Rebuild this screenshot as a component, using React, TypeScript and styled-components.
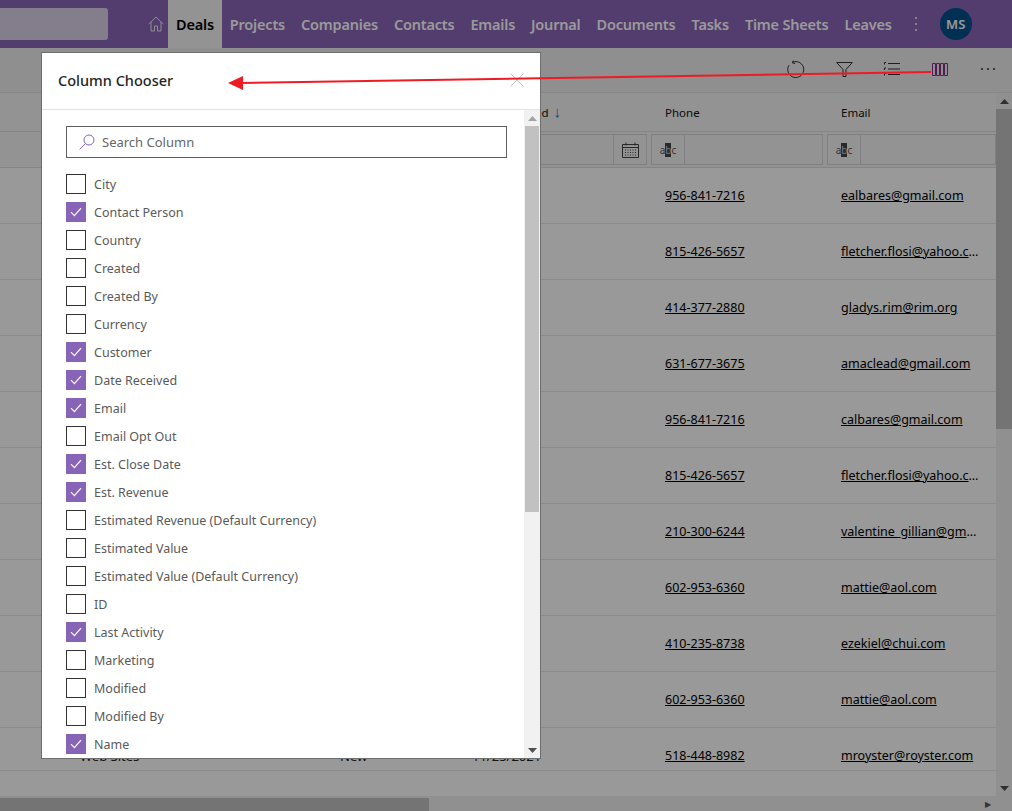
import React, { FunctionComponent } from "react";
import styled, { createGlobalStyle } from "styled-components";

const GlobalStyle = createGlobalStyle`
  html, body {
    margin: 0;
    padding: 0;
    background: #fff;
  }
  body {
    font-family: "Noto Sans", "Open Sans", "Liberation Sans", sans-serif;
  }
`;

const Page = styled.div`
  position: relative;
  width: 1012px;
  height: 811px;
  overflow: hidden;
  display: flex;
  flex-direction: column;
  background: #fff;
`;
const Nav = styled.nav`
  height: 48px;
  flex: none;
  display: flex;
  align-items: center;
  background: #8a64b8;
`;
const NavSearch = styled.div`
  width: 108px;
  height: 32px;
  flex: none;
  background: #e4d9ee;
  border-radius: 0 3px 3px 0;
  opacity: 0.92;
`;
const HomeLink = styled.span`
  margin-left: 35px;
  width: 25px;
  display: flex;
  justify-content: center;
  color: #eee;
`;
const NavList = styled.div`
  display: flex;
  align-self: stretch;
  align-items: center;
  font-size: 14.5px;
  font-weight: 600;
  letter-spacing: -0.2px;
`;
const NavItem = styled.a<{ $active?: boolean }>`
  height: 100%;
  display: flex;
  align-items: center;
  padding: 0 8px;
  color: ${(p) => (p.$active ? "#000" : "#fff")};
  background: ${(p) => (p.$active ? "#f5f5f5" : "transparent")};
`;
const Kebab = styled.span`
  margin-left: 8px;
  width: 16px;
  display: flex;
  justify-content: center;
  color: #fff;
`;
const Avatar = styled.div`
  margin-left: 16px;
  width: 32px;
  height: 32px;
  border-radius: 50%;
  background: #00518c;
  color: #fff;
  font-size: 13px;
  font-weight: 600;
  display: flex;
  align-items: center;
  justify-content: center;
`;
const Toolbar = styled.div`
  height: 44px;
  flex: none;
  display: flex;
  align-items: center;
  justify-content: flex-end;
  gap: 24px;
  padding-right: 12px;
  padding-bottom: 2px;
  box-sizing: border-box;
  background: #eeeeee;
`;
const ToolIcon = styled.span`
  width: 24px;
  height: 24px;
  display: flex;
  align-items: center;
  justify-content: center;
  color: #333;
`;
const Main = styled.div`
  flex: 1;
  min-height: 0;
  display: flex;
  border-top: 1px solid #e2e2e2;
  box-sizing: border-box;
`;
const GridArea = styled.div`
  flex: 1;
  min-width: 0;
  overflow: hidden;
  display: flex;
  flex-direction: column;
`;
const columns = "80px 260px 132px 193px 176px 155px";
const HeadRow = styled.div`
  display: grid;
  grid-template-columns: ${columns};
  height: 38px;
  flex: none;
  align-items: center;
  font-size: 11.5px;
  color: #111;
  background: #f5f5f5;
  border-bottom: 1px solid #dedede;
`;
const SortArrow = styled.span`
  margin-left: 5px;
  color: #0078d4;
  font-size: 15px;
  line-height: 1;
`;
const FilterRow = styled.div`
  height: 36px;
  flex: none;
  box-sizing: border-box;
  display: flex;
  justify-content: flex-end;
  gap: 4px;
  padding-top: 2px;
  background: #f5f5f5;
  border-bottom: 1px solid #dedede;
`;
const FilterCell = styled.div<{ $width: number }>`
  width: ${(p) => p.$width}px;
  height: 31px;
  flex: none;
  box-sizing: border-box;
  border: 1px solid #d6d6d6;
  display: flex;
  justify-content: flex-end;
`;
const FilterAddon = styled.div<{ $side: "left" | "right" }>`
  width: 32px;
  flex: none;
  margin-right: ${(p) => (p.$side === "left" ? "auto" : "0")};
  ${(p) => (p.$side === "left" ? "border-right" : "border-left")}: 1px solid #d6d6d6;
  display: flex;
  align-items: center;
  justify-content: center;
  font-size: 10px;
  color: #555;
`;
const AbcMark = styled.b`
  font-weight: 400;
  background: #444;
  color: #ccc;
`;
const Row = styled.div<{ $short?: boolean }>`
  display: grid;
  grid-template-columns: ${columns};
  height: ${(p) => (p.$short ? 43 : 56)}px;
  flex: none;
  box-sizing: border-box;
  align-items: ${(p) => (p.$short ? "start" : "center")};
  padding-top: ${(p) => (p.$short ? 19 : 0)}px;
  font-size: 13px;
  color: #222;
  border-bottom: 1px solid #e6e6e6;
`;
const CellLink = styled.a`
  color: #000;
  text-decoration: underline;
  font-size: 12.5px;
  white-space: nowrap;
  overflow: hidden;
  text-overflow: ellipsis;
  max-width: 142px;
`;
const VScrollbar = styled.div`
  width: 16px;
  flex: none;
  display: flex;
  flex-direction: column;
  align-items: center;
  background: #f0f0f0;
`;
const HScrollbar = styled.div`
  height: 15px;
  flex: none;
  display: flex;
  align-items: flex-end;
  background: #f0f0f0;
`;
const HThumb = styled.div`
  width: 429px;
  height: 13px;
  background: #c1c1c1;
`;
const HEnd = styled.div`
  margin-left: auto;
  width: 27px;
  height: 15px;
  display: flex;
  align-items: center;
  color: #555;
  font-size: 8px;
`;
const ArrowButton = styled.div<{ $dark?: boolean }>`
  height: 16px;
  flex: none;
  width: 100%;
  display: flex;
  align-items: center;
  justify-content: center;
  color: ${(p) => (p.$dark ? "#505050" : "#a3a3a3")};
`;
const Thumb = styled.div<{ $height: number; $width: number }>`
  width: ${(p) => p.$width}px;
  height: ${(p) => p.$height}px;
  flex: none;
  background: #c1c1c1;
`;
const Spacer = styled.div`
  flex: 1;
`;
const Overlay = styled.div`
  position: absolute;
  inset: 0;
  background: rgba(0, 0, 0, 0.4);
`;
const Modal = styled.div`
  position: absolute;
  left: 41px;
  top: 52px;
  width: 500px;
  height: 707px;
  box-sizing: border-box;
  border: 1px solid #6e6e6e;
  background: #fff;
  display: flex;
  flex-direction: column;
`;
const ModalHeader = styled.div`
  height: 57px;
  flex: none;
  box-sizing: border-box;
  padding: 0 16px 2px 16px;
  border-bottom: 1px solid #e3e3e3;
  display: flex;
  align-items: center;
  justify-content: space-between;
`;
const ModalTitle = styled.h2`
  margin: 0;
  font-size: 14.5px;
  font-weight: 500;
  color: #252525;
`;
const CloseButton = styled.span`
  display: flex;
  color: #c4c4c4;
`;
const ModalBody = styled.div`
  flex: 1;
  min-height: 0;
  display: flex;
`;
const ModalContent = styled.div`
  flex: 1;
  min-width: 0;
  overflow: hidden;
  padding: 16px 17px 0 24px;
`;
const SearchBox = styled.div`
  height: 32px;
  box-sizing: border-box;
  border: 1px solid #605e5c;
  display: flex;
  align-items: center;
  gap: 7px;
  padding-left: 12px;
  font-size: 13px;
  color: #666;
`;
const ChoiceList = styled.ul`
  list-style: none;
  margin: 12px 0 0 0;
  padding: 0;
`;
const Choice = styled.li`
  height: 28px;
  display: flex;
  align-items: center;
  gap: 8px;
  font-size: 12.5px;
  color: #5a5a5a;
`;
const Box = styled.span<{ $checked: boolean }>`
  width: 20px;
  height: 20px;
  flex: none;
  box-sizing: border-box;
  border: 1px solid ${(p) => (p.$checked ? "#8764b8" : "#333")};
  background: ${(p) => (p.$checked ? "#8764b8" : "#fff")};
  display: flex;
  align-items: center;
  justify-content: center;
`;
const ModalScroll = styled(VScrollbar)`
  background: #f1f1f1;
`;
const Annotation = styled.svg`
  position: absolute;
  left: 0;
  top: 0;
  pointer-events: none;
`;

const rows = [
  ["956-841-7216", "ealbares@gmail.com"],
  ["815-426-5657", "fletcher.flosi@yahoo.com"],
  ["414-377-2880", "gladys.rim@rim.org"],
  ["631-677-3675", "amaclead@gmail.com"],
  ["956-841-7216", "calbares@gmail.com"],
  ["815-426-5657", "fletcher.flosi@yahoo.com"],
  ["210-300-6244", "valentine_gillian@gmail.com"],
  ["602-953-6360", "mattie@aol.com"],
  ["410-235-8738", "ezekiel@chui.com"],
  ["602-953-6360", "mattie@aol.com"],
];

const choices: [string, boolean][] = [
  ["City", false],
  ["Contact Person", true],
  ["Country", false],
  ["Created", false],
  ["Created By", false],
  ["Currency", false],
  ["Customer", true],
  ["Date Received", true],
  ["Email", true],
  ["Email Opt Out", false],
  ["Est. Close Date", true],
  ["Est. Revenue", true],
  ["Estimated Revenue (Default Currency)", false],
  ["Estimated Value", false],
  ["Estimated Value (Default Currency)", false],
  ["ID", false],
  ["Last Activity", true],
  ["Marketing", false],
  ["Modified", false],
  ["Modified By", false],
  ["Name", true],
];

const navItems = ["Projects", "Companies", "Contacts", "Emails", "Journal", "Documents", "Tasks", "Time Sheets", "Leaves"];

const Triangle: FunctionComponent<{ up?: boolean }> = ({ up }) => (
  <svg width="9" height="5" viewBox="0 0 9 5">
    <path d={up ? "M4.5 0L9 5H0z" : "M0 0h9L4.5 5z"} fill="currentColor" />
  </svg>
);

const Calendar = () => (
  <svg width="17" height="16" viewBox="0 0 17 16" fill="none" stroke="#444">
    <path d="M.5 2.5h16v13H.5zM.5 5.5h16M4 .5v3M13 .5v3" />
    <path d="M3 8h11M3 10.5h11M3 13h11" strokeDasharray="1 1.5" />
  </svg>
);

const Abc = () => (
  <FilterAddon $side="left">
    a<AbcMark>b</AbcMark>c
  </FilterAddon>
);

const App: FunctionComponent = () => {
  return (
    <Page>
      <GlobalStyle />
      <Nav>
        <NavSearch />
        <HomeLink>
          <svg width="16" height="16" viewBox="0 0 16 16" fill="none" stroke="currentColor">
            <path d="M.8 8L8 1l7.2 7M3 6v9h3.5v-5h3v5H13V6" />
          </svg>
        </HomeLink>
        <NavList>
          <NavItem $active>Deals</NavItem>
          {navItems.map((item) => (
            <NavItem key={item}>{item}</NavItem>
          ))}
        </NavList>
        <Kebab>
          <svg width="4" height="16" viewBox="0 0 4 16" fill="currentColor">
            <circle cx="2" cy="2" r="1" />
            <circle cx="2" cy="8" r="1" />
            <circle cx="2" cy="14" r="1" />
          </svg>
        </Kebab>
        <Avatar>MS</Avatar>
      </Nav>
      <Toolbar>
        <ToolIcon>
          <svg width="18" height="18" viewBox="0 0 18 18" fill="none" stroke="currentColor">
            <path d="M5.5 2.2A8 8 0 1 1 2 5.2M6.2 .6l-.6 2.4 2.6.4" />
          </svg>
        </ToolIcon>
        <ToolIcon>
          <svg width="17" height="15" viewBox="0 0 17 15" fill="none" stroke="currentColor">
            <path d="M.7.5h15.6L10 7.5v7H7v-7z" />
          </svg>
        </ToolIcon>
        <ToolIcon>
          <svg width="16" height="14" viewBox="0 0 16 14" fill="none" stroke="currentColor">
            <path d="M4 1.5h12M4 7h12M4 12.5h12M2 .5H.5v2M2 6H.5v2M2 11.5H.5v2" />
          </svg>
        </ToolIcon>
        <ToolIcon>
          <svg width="16" height="13" viewBox="0 0 16 13" fill="none" stroke="#8a2f8a">
            <path d="M.5.5h3v12h-3zM4.5.5h3v12h-3zM8.5.5h3v12h-3zM12.5.5h3v12h-3z" />
          </svg>
        </ToolIcon>
        <ToolIcon>
          <svg width="14" height="2" viewBox="0 0 14 2" fill="currentColor">
            <circle cx="1" cy="1" r="1" />
            <circle cx="7" cy="1" r="1" />
            <circle cx="13" cy="1" r="1" />
          </svg>
        </ToolIcon>
      </Toolbar>
      <Main>
        <GridArea>
          <HeadRow>
            <span />
            <span>Name</span>
            <span>Status</span>
            <span>
              Date Received<SortArrow>↓</SortArrow>
            </span>
            <span>Phone</span>
            <span>Email</span>
          </HeadRow>
          <FilterRow>
            <FilterCell $width={200}>
              <FilterAddon $side="right">
                <Calendar />
              </FilterAddon>
            </FilterCell>
            <FilterCell $width={172}>
              <Abc />
            </FilterCell>
            <FilterCell $width={169}>
              <Abc />
            </FilterCell>
          </FilterRow>
          {rows.map(([phone, email], i) => (
            <Row key={i}>
              <span />
              <span />
              <span />
              <span />
              <CellLink>{phone}</CellLink>
              <CellLink>{email}</CellLink>
            </Row>
          ))}
          <Row $short>
            <span />
            <span>Web Sites</span>
            <span>New</span>
            <span>11/25/2021</span>
            <CellLink>518-448-8982</CellLink>
            <CellLink>mroyster@royster.com</CellLink>
          </Row>
        </GridArea>
        <VScrollbar>
          <ArrowButton $dark>
            <Triangle up />
          </ArrowButton>
          <Thumb $width={16} $height={320} />
          <Spacer />
          <ArrowButton $dark>
            <Triangle />
          </ArrowButton>
        </VScrollbar>
      </Main>
      <HScrollbar>
        <HThumb />
        <HEnd>▶</HEnd>
      </HScrollbar>
      <Overlay />
      <Modal>
        <ModalHeader>
          <ModalTitle>Column Chooser</ModalTitle>
          <CloseButton>
            <svg width="14" height="14" viewBox="0 0 14 14" fill="none" stroke="currentColor">
              <path d="M.5.5l13 13M13.5.5l-13 13" />
            </svg>
          </CloseButton>
        </ModalHeader>
        <ModalBody>
          <ModalContent>
            <SearchBox>
              <svg width="16" height="16" viewBox="0 0 16 16" fill="none" stroke="#8764b8">
                <circle cx="10" cy="6" r="5" />
                <path d="M6.4 9.6L.6 15.4" />
              </svg>
              Search Column
            </SearchBox>
            <ChoiceList>
              {choices.map(([label, checked]) => (
                <Choice key={label}>
                  <Box $checked={checked}>
                    {checked && (
                      <svg width="12" height="10" viewBox="0 0 12 10" fill="none" stroke="#fff" strokeWidth="1.2">
                        <path d="M1 5.2l3.4 3.4L11 1.2" />
                      </svg>
                    )}
                  </Box>
                  {label}
                </Choice>
              ))}
            </ChoiceList>
          </ModalContent>
          <ModalScroll>
            <ArrowButton>
              <Triangle up />
            </ArrowButton>
            <Thumb $width={14} $height={386} />
            <Spacer />
            <ArrowButton $dark>
              <Triangle />
            </ArrowButton>
          </ModalScroll>
        </ModalBody>
      </Modal>
      <Annotation width="1012" height="811" viewBox="0 0 1012 811">
        <path d="M931 72L240 83" stroke="#ed1c24" strokeWidth="2" fill="none" />
        <path d="M228 83L243 76V90z" fill="#ed1c24" />
      </Annotation>
    </Page>
  );
};

export default App;
